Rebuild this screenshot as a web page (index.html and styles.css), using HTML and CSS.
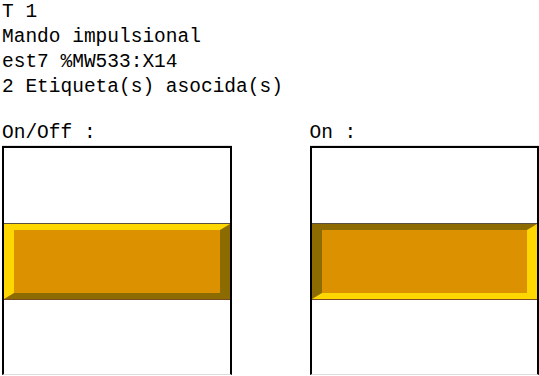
FILE: index.html
```html
<!DOCTYPE html>
<html lang="es">
	<head>
		<meta charset="utf-8">
		<title>T 1</title>
		<link rel="stylesheet" href="styles.css">
	</head>
	<body>
		<div class="info">
			<div class="line">T 1</div>
			<div class="line">Mando impulsional</div>
			<div class="line">est7 %MW533:X14</div>
			<div class="line">2 Etiqueta(s) asocida(s)</div>
		</div>

		<div class="views">
			<div class="view">
				<div class="label">On/Off :</div>
				<div class="box">
					<div class="bar raised"></div>
				</div>
			</div>
			<div class="view">
				<div class="label">On :</div>
				<div class="box">
					<div class="bar sunken"></div>
				</div>
			</div>
		</div>
	</body>
</html>
```

FILE: styles.css
```css
body {
	margin: 0px;
	padding: 0px 0px 0px 2px;
	background-color: #ffffff;
	color: #000000;
	font-family: "Liberation Mono", "Courier New", monospace;
	font-size: 19.5px;
	overflow: hidden;
}

.info {
	line-height: 25px;
}

.views {
	display: flex;
	gap: 78px;
	margin-top: 21px;
}

.view {
	width: 230px;
}

.label {
	line-height: 24px;
	height: 24px;
	border-bottom: 1px solid #e4e4e4;
}

.box {
	box-sizing: border-box;
	height: 229px;
	border: 2px solid #000000;
	border-bottom: 1px solid #dddddd;
	padding-top: 76px;
	background-color: #ffffff;
}

.bar {
	height: 63px;
	border-style: solid;
	border-width: 6px 10px;
	background-color: #db9100;
	box-shadow: 0 -1px 0 #5a5040, 0 1px 0 #7a4a20;
}

.raised {
	border-color: #ffd700 #8c6c00 #8c6c00 #ffd700;
}

.sunken {
	border-color: #8c6c00 #ffd700 #ffd700 #8c6c00;
}
```
